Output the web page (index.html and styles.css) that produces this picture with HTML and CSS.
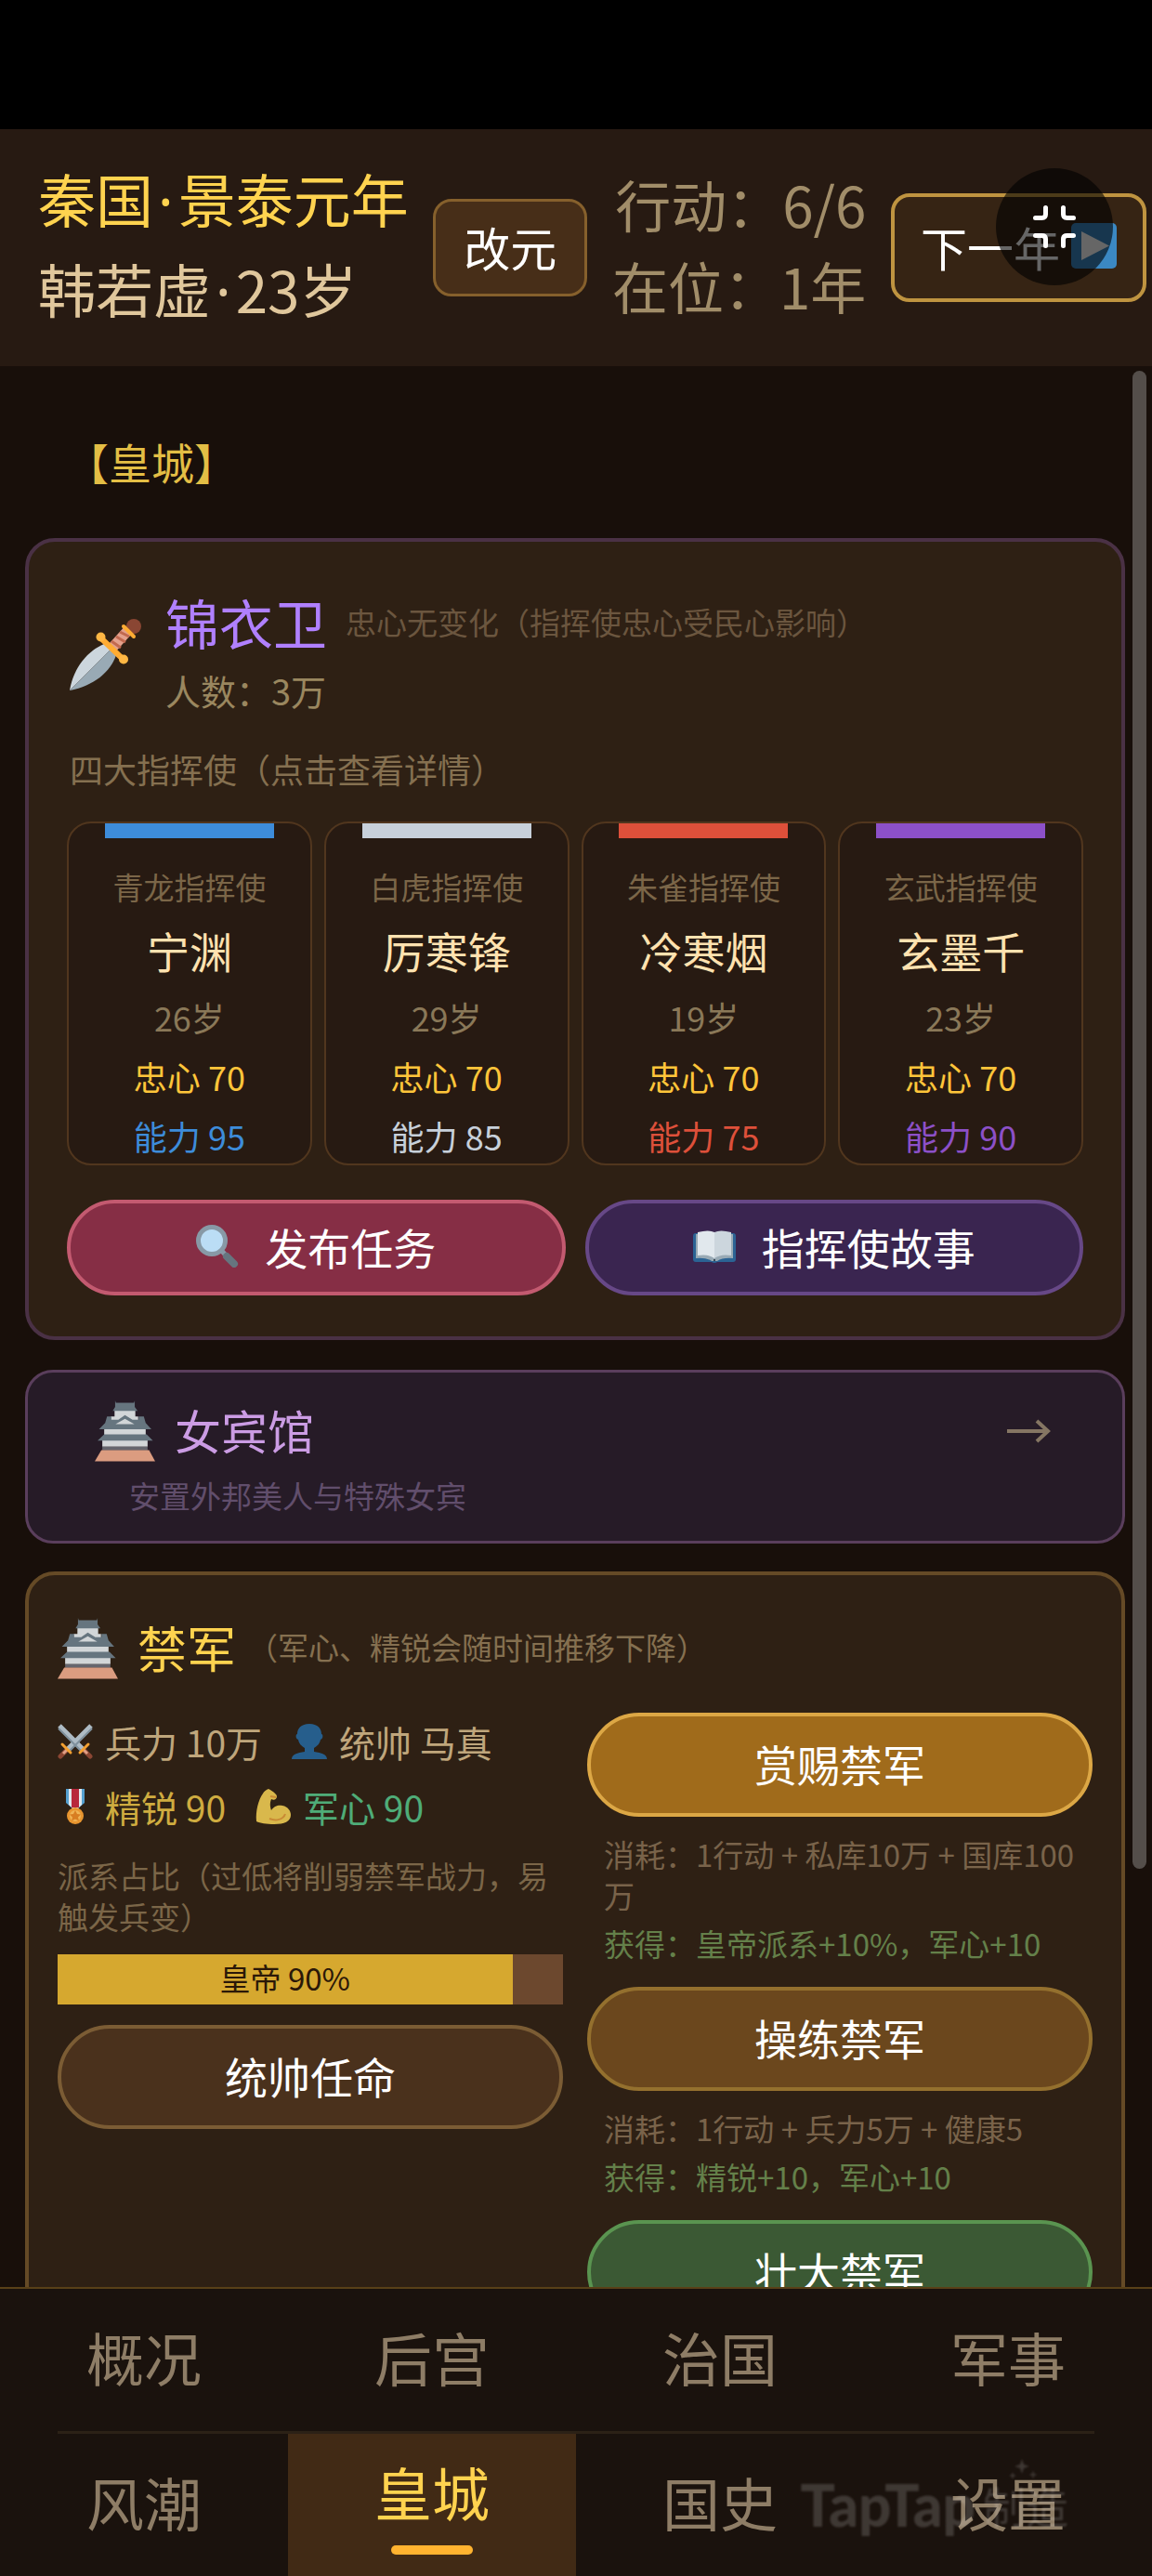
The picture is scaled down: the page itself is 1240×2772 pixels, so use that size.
FILE: index.html
```html
<!DOCTYPE html>
<html lang="zh-CN">
<head>
    <meta charset="UTF-8">
    <meta name="viewport" content="width=device-width, initial-scale=1.0">
    <title>皇城</title>
    <link rel="stylesheet" href="styles.css">
</head>
<body>
<!-- Shared icon shapes -->
<svg class="defs" aria-hidden="true">
    <symbol id="castle" viewBox="0 0 65 65">
        <path fill="#d2d6d8" d="M21 9h22v8h3v5H17v-5h4zM10 29h44v8H10zM8 41h48v8H8z"/>
        <path fill="#66757f" d="M21.6 0l.8 2.5h19.2l.8-2.5v7l3 4H19l2.6-4zM13 17h4.500l0 3.500H25L32 15.500 40 20.500h6.500V17H52l2 7 6 6.600H4.500L11 24zM10 36h45l6.600 6.600H3z"/>
        <path fill="#d2d6d8" d="M32 19.500l10 5.500H22z"/>
        <path fill="#66666e" d="M8 49h48v4H8z"/>
        <path fill="#db9c80" d="M7 52.600h50.600l6.400 12H0z"/>
    </symbol>
</svg>

<div class="status-bar"></div>

<header class="top-bar">
    <div class="reign">
        <h1>秦国<span class="dot">·</span>景泰元年</h1>
        <p>韩若虚<span class="dot">·</span>23岁</p>
    </div>
    <button type="button" class="era-btn">改元</button>
    <div class="turns">
        <p>行动：6/6</p>
        <p>在位：1年</p>
    </div>
    <button type="button" class="next-btn">
        <span>下一年</span>
        <svg class="play" viewBox="0 0 49 49" aria-hidden="true">
            <rect width="49" height="49" rx="5" fill="#3b88c3"/>
            <path fill="#fff" d="M11 9l30 15.500L11 40z"/>
        </svg>
    </button>
</header>

<button type="button" class="float-btn" aria-label="退出全屏">
    <svg viewBox="0 0 126 126" fill="none" stroke="#fff" stroke-width="5" stroke-linecap="round">
        <path d="M53.500 42.500v7q0 4-4 4h-7M72.500 42.500v7q0 4 4 4h7M42.500 72.500h7q4 0 4 4v7M83.500 72.500h-7q-4 0-4 4v7"/>
    </svg>
</button>

<main class="page">
    <div class="scroller">
        <h2 class="page-title">【皇城】</h2>

        <section class="card guard">
            <div class="guard-head">
                <svg class="dagger" viewBox="0 0 77 77" aria-hidden="true">
                    <path fill="#ccd6dd" d="M0 77C4 52 20 34 37 27l7 6z"/>
                    <path fill="#99aab5" d="M0 77l44-44 6 6C44 57 26 72 0 77z"/>
                    <path stroke="#e3a08b" stroke-width="11" d="M45 32l19-21"/>
                    <path stroke="#c1694f" stroke-width="3" d="M45 24l10 7M50 19l10 6M54 14l10 5"/>
                    <circle cx="69" cy="8" r="8" fill="#8a4633"/>
                    <path stroke="#ffac33" stroke-width="4" stroke-linecap="round" d="M58 8l11 11"/>
                    <path stroke="#ffac33" stroke-width="6" d="M33 20l25 24"/>
                    <circle cx="33.500" cy="19.500" r="5" fill="#ffb744"/>
                    <circle cx="58" cy="43.500" r="5" fill="#ffb744"/>
                </svg>
                <div>
                    <div class="guard-title">
                        <h3>锦衣卫</h3>
                        <span>忠心无变化（指挥使忠心受民心影响）</span>
                    </div>
                    <p class="guard-count">人数：3万</p>
                </div>
            </div>
            <p class="guard-hint">四大指挥使（点击查看详情）</p>

            <div class="officers">
                <button type="button" class="officer blue">
                    <i class="stripe"></i>
                    <span class="role">青龙指挥使</span>
                    <span class="name">宁渊</span>
                    <span class="age">26岁</span>
                    <span class="loyal">忠心 70</span>
                    <span class="skill">能力 95</span>
                </button>
                <button type="button" class="officer white">
                    <i class="stripe"></i>
                    <span class="role">白虎指挥使</span>
                    <span class="name">厉寒锋</span>
                    <span class="age">29岁</span>
                    <span class="loyal">忠心 70</span>
                    <span class="skill">能力 85</span>
                </button>
                <button type="button" class="officer red">
                    <i class="stripe"></i>
                    <span class="role">朱雀指挥使</span>
                    <span class="name">冷寒烟</span>
                    <span class="age">19岁</span>
                    <span class="loyal">忠心 70</span>
                    <span class="skill">能力 75</span>
                </button>
                <button type="button" class="officer purple">
                    <i class="stripe"></i>
                    <span class="role">玄武指挥使</span>
                    <span class="name">玄墨千</span>
                    <span class="age">23岁</span>
                    <span class="loyal">忠心 70</span>
                    <span class="skill">能力 90</span>
                </button>
            </div>

            <div class="guard-actions">
                <button type="button" class="btn btn-task">
                    <svg class="btn-icon" viewBox="0 0 46 46" aria-hidden="true">
                        <path stroke="#8899a6" stroke-width="5" d="M27 27l6 7"/>
                        <path stroke="#66757f" stroke-width="8" stroke-linecap="round" d="M33 34l8 8"/>
                        <circle cx="17" cy="17" r="14.500" fill="#bbddf5" stroke="#8899a6" stroke-width="5"/>
                    </svg>
                    发布任务
                </button>
                <button type="button" class="btn btn-story">
                    <svg class="btn-icon" viewBox="0 0 46 46" aria-hidden="true">
                        <path fill="#2b6394" d="M3 9h40q3 0 3 3v25q0 3-3 3H26q-3 2-6 0H3q-3 0-3-3V12q0-3 3-3z"/>
                        <path fill="#99aab5" d="M3 10h40v26q-11-1-17 3h-6q-6-4-17-3z"/>
                        <path fill="#e1e8ed" d="M5 8q12-3 18 0v28q-7-5-18-3z"/>
                        <path fill="#ccd6dd" d="M41 8q-12-3-18 0v28q7-5 18-3z"/>
                        <circle cx="23" cy="38" r="1" fill="#1b2a36"/>
                    </svg>
                    指挥使故事
                </button>
            </div>
        </section>

        <a href="#guests" class="card guests">
            <span class="guests-head">
                <svg class="castle" aria-hidden="true"><use href="#castle"/></svg>
                <span class="guests-name">女宾馆</span>
                <svg class="arrow" viewBox="0 0 48 26" aria-hidden="true">
                    <path fill="none" stroke="#857663" stroke-width="4" d="M0 13h44M32 2l12 11-12 11"/>
                </svg>
            </span>
            <span class="guests-note">安置外邦美人与特殊女宾</span>
        </a>

        <section class="card army">
            <div class="army-head">
                <svg class="castle" aria-hidden="true"><use href="#castle"/></svg>
                <h3>禁军</h3>
                <span>（军心、精锐会随时间推移下降）</span>
            </div>
            <div class="army-body">
                <div class="army-left">
                    <div class="stats">
                        <span class="stat">
                            <svg viewBox="0 0 38 38" aria-hidden="true">
                                <path stroke="#aebbc4" stroke-width="5" d="M2 2l25 25M36 2L11 27"/>
                                <path stroke="#7f909c" stroke-width="2" d="M1 5l24 24M37 5L13 29"/>
                                <path stroke="#8a4633" stroke-width="5" stroke-linecap="round" d="M29 29l6 6M9 29l-6 6"/>
                                <path stroke="#e0a086" stroke-width="3" d="M28 28l4 4M10 28l-4 4"/>
                                <path stroke="#f4a030" stroke-width="3" stroke-linecap="round" d="M33 22l-9 9M5 22l9 9"/>
                            </svg>
                            兵力 10万
                        </span>
                        <span class="stat">
                            <svg viewBox="0 0 38 38" aria-hidden="true">
                                <path fill="#265e8c" d="M19 0c9 0 13 5 13 11 2 0 2 5-1 6-1 5-4 7-7 9v4c8 1 14 3 14 8H0c0-5 6-7 14-8v-4c-3-2-6-4-7-9-3-1-3-6-1-6C6 5 10 0 19 0z"/>
                            </svg>
                            统帅 马真
                        </span>
                    </div>
                    <div class="stats">
                        <span class="stat elite">
                            <svg viewBox="0 0 38 38" aria-hidden="true">
                                <path fill="#55a0d0" d="M9 0h20v15l-7 6h-6l-7-6z"/>
                                <path fill="#e1e8ed" d="M12 0h14v17l-4 4h-6l-4-4z"/>
                                <path fill="#b8283c" d="M15 0h8v20h-8z"/>
                                <circle cx="19" cy="29" r="9" fill="#e8952f"/>
                                <circle cx="19" cy="29" r="6" fill="#f0b455"/>
                                <path fill="#d87e22" d="M19 23l2 4 4 .500-3 3 1 4-4-2-4 2 1-4-3-3 4-.500z"/>
                            </svg>
                            精锐 90
                        </span>
                        <span class="stat morale">
                            <svg viewBox="0 0 38 38" aria-hidden="true">
                                <path fill="#d9b84c" d="M14 0c2 1 9 5 9 8 0 3-3 5-6 3-2 5-1 9 0 12 3-5 8-6 12-5 6 1 9 6 9 10 0 7-7 10-18 10C12 38 5 37 1 35 0 24 3 12 8 5c1-2 3-4 6-5z"/>
                                <path fill="none" stroke="#c98a35" stroke-width="2" d="M15 32c7 3 15 1 17-5M16 8l6 1"/>
                            </svg>
                            军心 90
                        </span>
                    </div>
                    <p class="faction-note">派系占比（过低将削弱禁军战力，易触发兵变）</p>
                    <div class="faction-bar">
                        <div class="faction-fill" style="width: 90%">皇帝 90%</div>
                    </div>
                    <button type="button" class="btn btn-tall btn-general">统帅任命</button>
                </div>
                <div class="army-right">
                    <div class="action">
                        <button type="button" class="btn btn-tall btn-reward">赏赐禁军</button>
                        <p class="cost">消耗：1行动 + 私库10万 + 国库100万</p>
                        <p class="gain">获得：皇帝派系+10%，军心+10</p>
                    </div>
                    <div class="action">
                        <button type="button" class="btn btn-tall btn-drill">操练禁军</button>
                        <p class="cost">消耗：1行动 + 兵力5万 + 健康5</p>
                        <p class="gain">获得：精锐+10，军心+10</p>
                    </div>
                    <div class="action">
                        <button type="button" class="btn btn-tall btn-grow">壮大禁军</button>
                    </div>
                </div>
            </div>
        </section>
    </div>
    <div class="scroll-thumb"></div>
</main>

<nav class="tabs">
    <div class="tab-row">
        <a href="#overview">概况</a>
        <a href="#harem">后宫</a>
        <a href="#govern">治国</a>
        <a href="#military">军事</a>
    </div>
    <div class="tab-line"></div>
    <div class="tab-row">
        <a href="#trends">风潮</a>
        <a href="#city" class="active">皇城</a>
        <a href="#history">国史</a>
        <a href="#settings">设置</a>
    </div>
    <div class="watermark">
        <b>TapTap</b>
        <span>制造</span>
        <svg class="sparkle" viewBox="0 0 32 24" aria-hidden="true">
            <path fill="currentColor" d="M14 0l2 6 6 2-6 2-2 6-2-6-6-2 6-2zM4 14l1 3 3 1-3 1-1 3-1-3-3-1 3-1zM26 12l1 4 4 1-4 1-1 4-1-4-4-1 4-1z"/>
        </svg>
    </div>
</nav>
</body>
</html>
```
FILE: styles.css
```css
* {
    box-sizing: border-box;
}

body {
    display: flex;
    flex-direction: column;
    height: 100vh;
    margin: 0;
    background-color: #180f0a;
    color: #fff;
    font-family: "Noto Sans CJK SC", sans-serif;
    font-size: 33px;
    overflow: hidden;
}

h1, h2, h3, p {
    margin: 0;
    font-weight: 400;
}

button {
    padding: 0;
    color: inherit;
    font-family: inherit;
    cursor: pointer;
}

a {
    color: inherit;
    text-decoration: none;
}

svg {
    display: block;
    flex-shrink: 0;
}

.defs {
    position: absolute;
    width: 0;
    height: 0;
}

.status-bar {
    flex: none;
    height: 139px;
    background-color: #000;
}

/* Top bar */
.top-bar {
    display: flex;
    flex: none;
    justify-content: space-between;
    align-items: center;
    height: 255px;
    padding: 0 6px 0 41px;
    background-color: #271a12;
    white-space: nowrap;
}

.reign,
.turns {
    padding-bottom: 8px;
}

.reign h1,
.reign p {
    font-size: 62px;
    line-height: 94px;
}

.reign h1 {
    color: #ffd34f;
}

.reign p {
    color: #e0c79c;
}

.dot {
    margin: 0 5px;
    font-family: "Noto Sans", sans-serif;
}

.era-btn {
    height: 105px;
    padding: 0 30px 4px;
    border: 3px solid #86602c;
    border-radius: 20px;
    background-color: #472e18;
    font-size: 50px;
}

.turns {
    color: #a18d69;
    font-size: 60px;
    line-height: 88px;
    text-align: right;
}

.next-btn {
    display: flex;
    align-items: center;
    gap: 12px;
    height: 117px;
    padding: 0 28px 4px;
    border: 4px solid #bf9440;
    border-radius: 20px;
    background-color: #362414;
    font-size: 50px;
}

.play {
    width: 49px;
    height: 49px;
}

.float-btn {
    position: absolute;
    top: 181px;
    right: 42px;
    width: 126px;
    height: 126px;
    border: 0;
    border-radius: 50%;
    background-color: rgba(0, 0, 0, 0.6);
    z-index: 2;
}

/* Page */
.page {
    position: relative;
    flex: 1;
    min-height: 0;
}

.scroller {
    height: 100%;
    padding: 72px 29px 0 27px;
    overflow-y: auto;
    scrollbar-width: none;
}

.scroll-thumb {
    position: absolute;
    top: 5px;
    right: 6px;
    width: 15px;
    height: 78%;
    border-radius: 8px;
    background-color: #544e4a;
}

.page-title {
    margin-bottom: 53px;
    padding-left: 44px;
    color: #e3be45;
    font-size: 46px;
    line-height: 60px;
}

.card {
    display: block;
    border: 4px solid #4a3145;
    border-radius: 32px;
    background-color: #2e2014;
}

.btn {
    display: flex;
    flex: 1;
    justify-content: center;
    align-items: center;
    gap: 28px;
    height: 103px;
    padding-bottom: 4px;
    border: 4px solid;
    border-radius: 56px;
    font-size: 46px;
}

.btn-icon {
    width: 46px;
    height: 46px;
}

.btn-tall {
    width: 100%;
    height: 112px;
}

.btn-task { background-color: #862e45; border-color: #c35a70; }
.btn-story { background-color: #3a2550; border-color: #674887; }
.btn-general { background-color: #4a311c; border-color: #7b5c34; }
.btn-reward { background-color: #a06b1b; border-color: #dca745; }
.btn-drill { background-color: #6b471d; border-color: #94702e; }
.btn-grow { background-color: #3b5934; border-color: #5a9450; }

/* Imperial guard */
.guard {
    padding: 50px 41px 44px;
}

.guard-head {
    display: flex;
    align-items: center;
    gap: 26px;
    padding-left: 3px;
}

.dagger {
    width: 77px;
    height: 77px;
}

.guard-title {
    display: flex;
    align-items: center;
    gap: 20px;
    color: #6b563f;
    line-height: 72px;
}

.guard-title h3 {
    color: #b080ff;
    font-size: 58px;
}

.guard-count {
    margin-top: 6px;
    color: #9a875f;
    font-size: 38px;
    line-height: 64px;
}

.guard-hint {
    margin: 25px 0 30px;
    padding-left: 3px;
    color: #857050;
    font-size: 36px;
    line-height: 54px;
}

.officers {
    display: grid;
    grid-template-columns: repeat(4, 1fr);
    gap: 13px;
}

.officer {
    display: flex;
    flex-direction: column;
    align-items: center;
    gap: 12px;
    padding-bottom: 4px;
    border: 2px solid #51361e;
    border-radius: 26px;
    background-color: #271a12;
    font-size: 36px;
    line-height: 52px;
}

.stripe {
    width: 70%;
    height: 16px;
    margin-bottom: 18px;
    background-color: currentColor;
}

.role {
    color: #7b6648;
    font-size: 33px;
    line-height: 44px;
}

.name {
    color: #ffe2b0;
    font-size: 46px;
    line-height: 68px;
}

.age {
    color: #8a7858;
}

.loyal {
    color: #ffc53a;
}

.blue { color: #3d8cda; }
.white { color: #c7d0da; }
.red { color: #dd503a; }
.purple { color: #8c50c8; }

.guard-actions {
    display: flex;
    gap: 21px;
    margin-top: 37px;
}

/* Guest house */
.castle {
    width: 66px;
    height: 66px;
}

.guests {
    margin-top: 32px;
    padding: 30px 76px 25px 72px;
    border: 3px solid #5a3e5c;
    border-radius: 30px;
    background-color: #261b27;
}

.guests-head {
    display: flex;
    align-items: center;
    gap: 20px;
    line-height: 66px;
}

.guests-name {
    flex: 1;
    padding-bottom: 4px;
    color: #cb9ce4;
    font-size: 50px;
    line-height: 62px;
}

.arrow {
    width: 48px;
    height: 26px;
}

.guests-note {
    display: block;
    margin-top: 12px;
    padding-left: 37px;
    color: #614e6c;
    line-height: 48px;
}

/* Palace army */
.army {
    margin-top: 30px;
    padding: 46px 31px 40px;
    border-color: #654a26;
}

.army-head {
    display: flex;
    align-items: center;
    gap: 20px;
    color: #857050;
    line-height: 62px;
}

.army-head h3 {
    padding-bottom: 4px;
    color: #ffd34f;
    font-size: 53px;
}

.army-head span {
    margin-left: -8px;
    padding-bottom: 4px;
}

.army-body {
    display: grid;
    grid-template-columns: 1fr 1fr;
    gap: 26px;
    margin-top: 36px;
}

.stats {
    display: flex;
    gap: 32px;
    margin-bottom: 8px;
    color: #bfa67c;
    font-size: 39px;
    line-height: 62px;
}

.stat {
    display: flex;
    align-items: center;
    gap: 13px;
    white-space: nowrap;
}

.stat svg {
    width: 38px;
    height: 38px;
}

.elite {
    color: #cfac40;
}

.morale {
    color: #4fac78;
}

.faction-note {
    margin: 21px 0 19px;
    color: #7b6648;
    line-height: 44px;
}

.faction-bar {
    margin-bottom: 22px;
    background-color: #6c482e;
}

.faction-fill {
    padding-bottom: 4px;
    background-color: #d6a82f;
    color: #2b1808;
    line-height: 50px;
    text-align: center;
}

.army-right {
    display: flex;
    flex-direction: column;
    gap: 25px;
}

.cost,
.gain {
    padding: 0 18px;
    line-height: 44px;
}

.cost {
    margin: 18px 0 8px;
    color: #79634a;
}

.gain {
    color: #64804a;
}

/* Bottom tabs */
.tabs {
    position: relative;
    flex: none;
    border-top: 2px solid #594018;
    background-color: #1a120d;
    color: #8e7d66;
    font-size: 62px;
}

.tab-row {
    display: grid;
    grid-template-columns: repeat(4, 1fr);
    height: 153px;
}

.tab-row a {
    display: flex;
    flex-direction: column;
    justify-content: center;
    align-items: center;
    padding-bottom: 8px;
    line-height: 92px;
}

.tab-row .active {
    background-color: #412a15;
    color: #ffd34f;
}

.active::after {
    width: 88px;
    height: 10px;
    margin-top: 12px;
    border-radius: 5px;
    background-color: #ffb330;
    content: "";
}

.tab-line {
    height: 3px;
    margin: 0 62px;
    background-color: #2c2116;
}

/* Store mark laid over the last tabs */
.watermark {
    position: absolute;
    right: 90px;
    bottom: 42px;
    display: flex;
    align-items: center;
    gap: 8px;
    color: rgba(255, 255, 255, 0.16);
    font-size: 46px;
    line-height: 70px;
    filter: blur(1px);
    pointer-events: none;
}

.watermark b {
    font-family: Lato, sans-serif;
    font-size: 62px;
    font-weight: 900;
}

.sparkle {
    position: absolute;
    top: -14px;
    right: 32px;
    width: 32px;
    height: 24px;
}
```
